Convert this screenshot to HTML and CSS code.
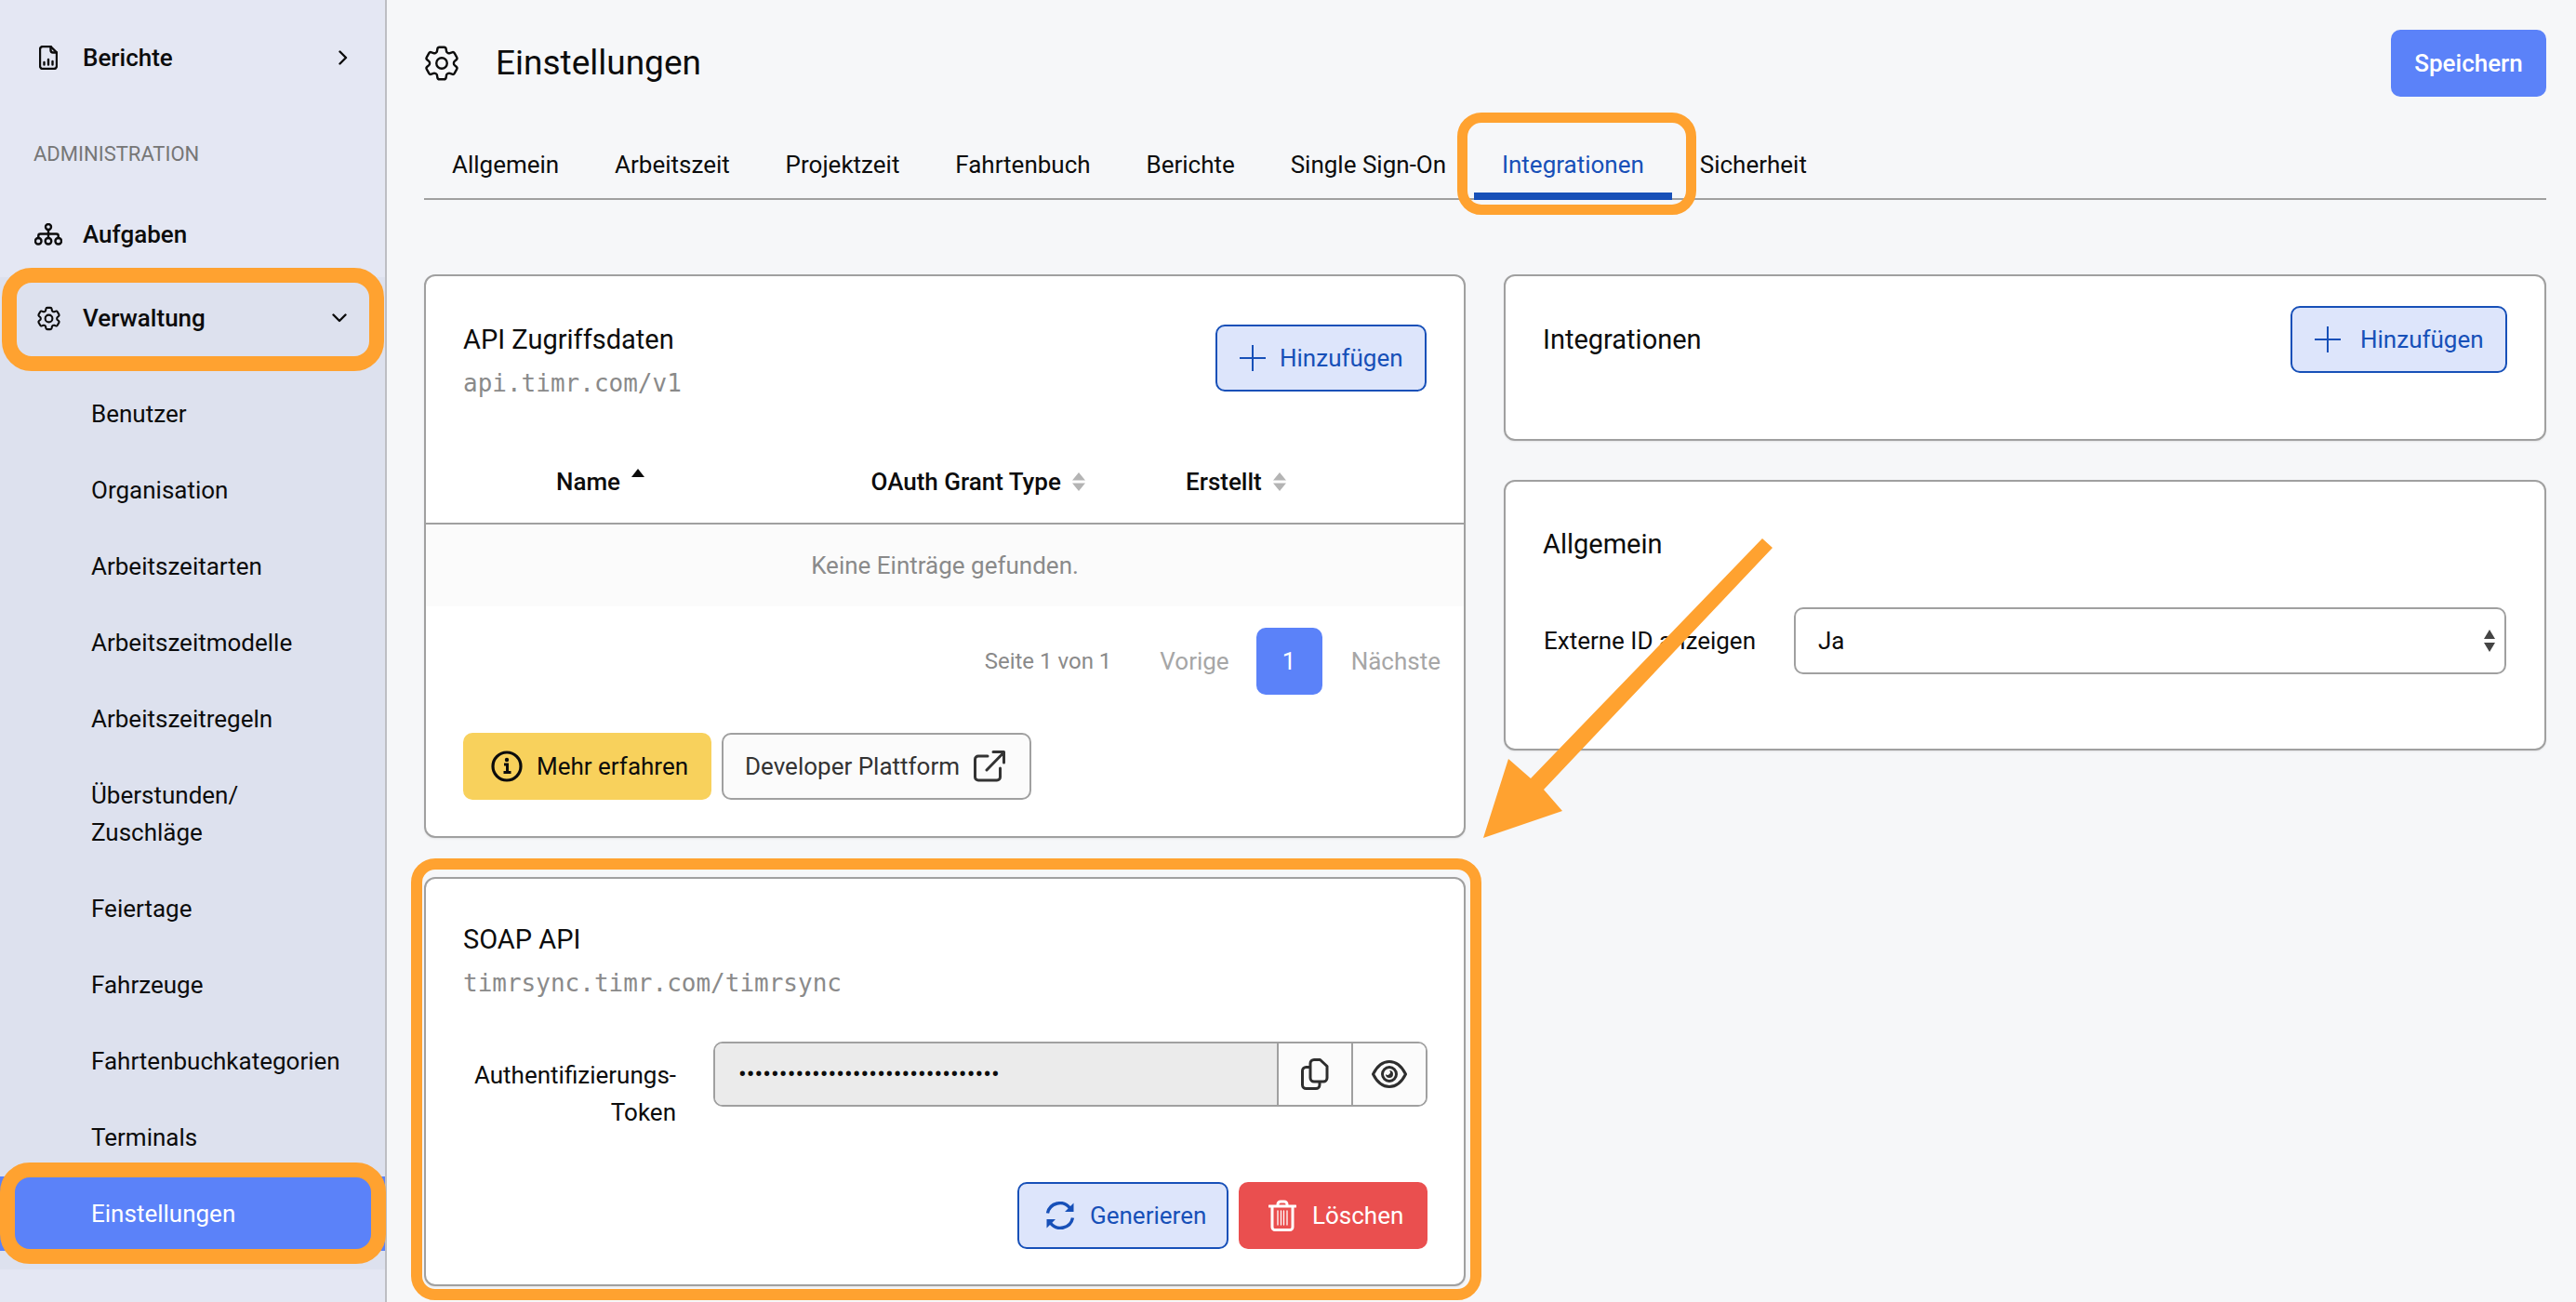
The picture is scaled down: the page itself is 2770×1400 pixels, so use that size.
FILE: index.html
```html
<!DOCTYPE html>
<html lang="de">
<head>
<meta charset="utf-8">
<title>Einstellungen</title>
<link rel="stylesheet" href="styles.css">
</head>
<body>
<svg class="defs" width="0" height="0" aria-hidden="true">
  <symbol id="gear" viewBox="0 0 24 24">
    <path d="M9.594 3.94c.09-.542.56-.94 1.11-.94h2.593c.55 0 1.02.398 1.11.94l.213 1.281c.063.374.313.686.645.87.074.04.147.083.22.127.325.196.72.257 1.075.124l1.217-.456a1.125 1.125 0 0 1 1.37.49l1.296 2.247a1.125 1.125 0 0 1-.26 1.431l-1.003.827c-.293.241-.438.613-.43.992a7.723 7.723 0 0 1 0 .255c-.008.378.137.75.43.991l1.004.827c.424.35.534.955.26 1.43l-1.298 2.247a1.125 1.125 0 0 1-1.369.491l-1.217-.456c-.355-.133-.75-.072-1.076.124a6.47 6.47 0 0 1-.22.128c-.331.183-.581.495-.644.869l-.213 1.281c-.09.543-.56.94-1.11.94h-2.594c-.55 0-1.019-.398-1.11-.94l-.213-1.281c-.062-.374-.312-.686-.644-.87a6.52 6.52 0 0 1-.22-.127c-.325-.196-.72-.257-1.076-.124l-1.217.456a1.125 1.125 0 0 1-1.369-.49l-1.297-2.247a1.125 1.125 0 0 1 .26-1.431l1.004-.827c.292-.24.437-.613.43-.991a6.932 6.932 0 0 1 0-.255c.007-.38-.138-.751-.43-.992l-1.004-.827a1.125 1.125 0 0 1-.26-1.43l1.297-2.247a1.125 1.125 0 0 1 1.37-.491l1.216.456c.356.133.751.072 1.076-.124.072-.044.146-.086.22-.128.332-.183.582-.495.644-.869l.214-1.28Z"/>
    <circle cx="12" cy="12" r="3"/>
  </symbol>
  <symbol id="plus" viewBox="0 0 28 28"><path d="M14 0v28M0 14h28"/></symbol>
  <symbol id="sort" viewBox="0 0 16 20"><path d="M8 0l7 8.5H1zM8 20l7-8.5H1z"/></symbol>
</svg>

<div class="app">
  <aside class="sidebar">
    <a class="nav-item nav-first">
      <svg class="nav-icon icon-file" viewBox="0 0 20 26"><path d="M4 1h8.500L19 7.500V22a3 3 0 0 1-3 3H4a3 3 0 0 1-3-3V4a3 3 0 0 1 3-3z"/><path d="M12.500 1v4A2.500 2.500 0 0 0 15 7.500h4"/><path d="M5.500 20.500V18M10 20.500v-5.500M14.500 20.500V17"/></svg>
      <span class="nav-label">Berichte</span>
      <svg class="chev-right" viewBox="0 0 10 16"><path d="M1.500 1.500L8 8l-6.500 6.500"/></svg>
    </a>
    <div class="nav-section">ADMINISTRATION</div>
    <a class="nav-item">
      <svg class="nav-icon icon-tree" viewBox="0 0 30 24"><circle cx="15" cy="4" r="3"/><rect x="1" y="16" width="6.500" height="6.500" rx="3"/><rect x="11.700" y="16" width="6.500" height="6.500" rx="3"/><rect x="22.500" y="16" width="6.500" height="6.500" rx="3"/><path d="M15 7.500V16M4.300 16v-2.500a2 2 0 0 1 2-2h17.400a2 2 0 0 1 2 2V16"/></svg>
      <span class="nav-label">Aufgaben</span>
    </a>
    <div class="nav-group">
      <a class="nav-item nav-open">
        <svg class="nav-icon icon-gear"><use href="#gear"/></svg>
        <span class="nav-label">Verwaltung</span>
        <svg class="chev-down" viewBox="0 0 16 10"><path d="M1.500 1.500L8 8l6.500-6.500"/></svg>
      </a>
      <a class="sub-item">Benutzer</a>
      <a class="sub-item">Organisation</a>
      <a class="sub-item">Arbeitszeitarten</a>
      <a class="sub-item">Arbeitszeitmodelle</a>
      <a class="sub-item">Arbeitszeitregeln</a>
      <a class="sub-item">Überstunden/<br>Zuschläge</a>
      <a class="sub-item">Feiertage</a>
      <a class="sub-item">Fahrzeuge</a>
      <a class="sub-item">Fahrtenbuchkategorien</a>
      <a class="sub-item">Terminals</a>
      <a class="sub-item sub-active">Einstellungen</a>
    </div>
  </aside>

  <main class="main">
    <header class="page-head">
      <div class="page-title">
        <svg class="title-icon"><use href="#gear"/></svg>
        <h1>Einstellungen</h1>
      </div>
      <button class="btn btn-primary">Speichern</button>
    </header>

    <nav class="tabs">
      <a class="tab">Allgemein</a>
      <a class="tab">Arbeitszeit</a>
      <a class="tab">Projektzeit</a>
      <a class="tab">Fahrtenbuch</a>
      <a class="tab">Berichte</a>
      <a class="tab">Single Sign-On</a>
      <a class="tab tab-active">Integrationen</a>
      <a class="tab">Sicherheit</a>
    </nav>

    <div class="columns">
      <div class="col">
        <section class="card">
          <div class="card-head">
            <div class="card-heading">
              <h2>API Zugriffsdaten</h2>
              <div class="mono">api.timr.com/v1</div>
            </div>
            <button class="btn btn-soft btn-add-low">
              <svg class="plus"><use href="#plus"/></svg>Hinzufügen
            </button>
          </div>
          <div class="table-head">
            <div class="th">Name<svg class="sort-up" viewBox="0 0 16 10"><path d="M8 0l7 9H1z"/></svg></div>
            <div class="th">OAuth Grant Type<svg class="sort"><use href="#sort"/></svg></div>
            <div class="th">Erstellt<svg class="sort"><use href="#sort"/></svg></div>
          </div>
          <div class="table-empty">Keine Einträge gefunden.</div>
          <div class="pager">
            <span class="pager-info">Seite 1 von 1</span>
            <span class="pager-link pager-prev">Vorige</span>
            <span class="pager-num">1</span>
            <span class="pager-link">Nächste</span>
          </div>
          <div class="card-links">
            <button class="btn btn-yellow">
              <svg class="info" viewBox="0 0 34 34"><circle cx="17" cy="17" r="15"/><path d="M14 15h3.500v8M13.500 23.500h8" class="info-stem"/><circle cx="17" cy="10" r="2.200" class="info-dot"/></svg>Mehr erfahren
            </button>
            <button class="btn btn-outline">Developer Plattform
              <svg class="ext" viewBox="0 0 34 34"><path d="M15 6H5a3.500 3.500 0 0 0-3.500 3.500v19A3.500 3.500 0 0 0 5 32h20a3.500 3.500 0 0 0 3.500-3.500V19"/><path d="M14 21L32.500 2M21 1.500h11.500V13"/></svg>
            </button>
          </div>
        </section>

        <section class="card">
          <div class="card-heading soap-heading">
            <h2>SOAP API</h2>
            <div class="mono">timrsync.timr.com/timrsync</div>
          </div>
          <div class="form-row soap-row">
            <label class="form-label">Authentifizierungs-<br>Token</label>
            <div class="input-group">
              <div class="input-value">••••••••••••••••••••••••••••••••</div>
              <button class="input-btn">
                <svg class="copy" viewBox="0 0 30 34"><path d="M14 1.500h6.500l7.500 7V21a4 4 0 0 1-4 4H14a4 4 0 0 1-4-4V5.500a4 4 0 0 1 4-4z"/><path d="M10 9.500H5.500a4 4 0 0 0-4 4V28.500a4 4 0 0 0 4 4H16a4 4 0 0 0 4-4V25"/></svg>
              </button>
              <button class="input-btn">
                <svg class="eye" viewBox="0 0 38 30"><path d="M1.500 15C6 6 12 1.500 19 1.500S32 6 36.500 15C32 24 26 28.500 19 28.500S6 24 1.500 15z"/><circle cx="19" cy="15" r="7.500"/><path class="eye-glint" d="M19 11a4 4 0 1 1-4 4 2.500 2.500 0 0 0 4-4z"/></svg>
              </button>
            </div>
          </div>
          <div class="soap-actions">
            <button class="btn btn-soft btn-gen">
              <svg class="sync" viewBox="0 0 32 30"><path d="M2.500 12.500A13.500 13.500 0 0 1 26.500 7"/><path d="M29.500 17.500A13.500 13.500 0 0 1 5.500 23"/><path class="sync-head" d="M30.500 1.500v9.500H21zM1.500 28.500V19H11z"/></svg>Generieren
            </button>
            <button class="btn btn-danger">
              <svg class="trash" viewBox="0 0 30 34"><path d="M1 7h28M10 7V5a3 3 0 0 1 3-3h4a3 3 0 0 1 3 3v2M4 7v22.500A3 3 0 0 0 7 32.500h16a3 3 0 0 0 3-3V7"/><path class="trash-lines" d="M10 12v15M13.500 12v15M16.500 12v15M20 12v15"/></svg>Löschen
            </button>
          </div>
        </section>
      </div>

      <div class="col">
        <section class="card card-integrations">
          <div class="card-head">
            <h2 class="card-heading">Integrationen</h2>
            <button class="btn btn-soft btn-add-wide">
              <svg class="plus"><use href="#plus"/></svg>Hinzufügen
            </button>
          </div>
        </section>
        <section class="card card-general">
          <h2 class="general-heading">Allgemein</h2>
          <div class="form-row general-row">
            <label class="form-label">Externe ID anzeigen</label>
            <div class="select">
              <span>Ja</span>
              <svg class="select-arrows" viewBox="0 0 14 24"><path d="M7 0l6 10H1zM7 24l6-10H1z"/></svg>
            </div>
          </div>
        </section>
      </div>
    </div>
  </main>
</div>

<div class="marks">
  <div class="mark mark-verwaltung"></div>
  <div class="mark mark-einstellungen"></div>
  <div class="mark mark-tab"></div>
  <div class="mark mark-soap"></div>
  <svg class="arrow" viewBox="0 0 2770 1400"><polygon points="1895,579 1906,589 1660,849 1680,872 1595,901 1622,816 1646,837"/></svg>
</div>
</body>
</html>
```

FILE: styles.css
```css
* { box-sizing: border-box; }

html, body {
  margin: 0;
  height: 100%;
}

body {
  position: relative;
  height: 1400px;
  overflow: hidden;
  background: #f6f7f9;
  color: #0c0c0c;
  font: 400 26px/40px Roboto, "Liberation Sans", sans-serif;
}

h1, h2 { margin: 0; font-weight: 400; }

button { font: inherit; }

.defs { position: absolute; }

.app {
  display: flex;
  height: 1400px;
}

/* Sidebar */
.sidebar {
  flex: 0 0 416px;
  padding-top: 22px;
  background: #e4e7f3;
  border-right: 2px solid #bdbec3;
}

.nav-item {
  display: flex;
  align-items: center;
  height: 80px;
  padding-left: 36px;
  font-weight: 500;
}

.nav-icon {
  flex: none;
  fill: none;
  stroke: #0c0c0c;
  stroke-width: 2.400;
  stroke-linecap: round;
  stroke-linejoin: round;
}

.icon-file { width: 20px; height: 26px; margin: 0 27px 0 6px; }
.icon-tree { width: 30px; height: 24px; margin: 0 22px 0 1px; }
.icon-gear { width: 31px; height: 31px; margin: 0 21px 0 1px; stroke-width: 1.600; }

.chev-right, .chev-down {
  flex: none;
  margin-left: auto;
  fill: none;
  stroke: #0c0c0c;
  stroke-width: 2.400;
  stroke-linecap: round;
  stroke-linejoin: round;
}

.chev-right { width: 10px; height: 16px; margin-right: 40px; }
.chev-down { width: 16px; height: 10px; margin-right: 41px; }

.nav-section {
  height: 40px;
  margin: 44px 0 26px;
  padding-left: 36px;
  color: #767676;
  font-size: 22px;
}

.nav-group {
  margin-top: 6px;
  padding-bottom: 20px;
  background: #dde1ee;
}

.nav-open {
  height: 88px;
  margin-bottom: 19px;
}

.sub-item {
  display: block;
  margin-bottom: 2px;
  padding: 20px 20px 20px 98px;
}

.sub-item:last-child { margin-bottom: 0; }

.sub-active {
  margin-top: 1px;
  background: #5b82f9;
  color: #fff;
}

/* Main */
.main {
  flex: 1;
  min-width: 0;
  padding: 32px 32px 0 40px;
}

.page-head {
  display: flex;
  align-items: center;
  justify-content: space-between;
  height: 72px;
}

.page-title {
  display: flex;
  align-items: center;
  gap: 39px;
}

.page-title h1 { font-size: 37px; }

.title-icon {
  width: 46px;
  height: 46px;
  margin-left: -4px;
  margin-right: -4px;
  fill: none;
  stroke: #0c0c0c;
  stroke-width: 1.250;
}

.tabs {
  display: flex;
  margin-top: 33px;
  border-bottom: 2px solid #a0a0a0;
}

.tab {
  margin-bottom: -2px;
  padding: 20px 29.930px 10px;
  border-bottom: 8px solid transparent;
}

.tab-active {
  color: #1750b8;
  border-bottom-color: #1750b8;
}

.columns {
  display: grid;
  grid-template-columns: 1120px 1121px;
  gap: 41px;
  margin-top: 80px;
}

.col {
  display: flex;
  flex-direction: column;
  gap: 42px;
}

.card {
  background: #fff;
  border: 2px solid #a0a0a0;
  border-radius: 12px;
  box-shadow: 0 1px 2px rgba(0, 0, 0, .08);
}

.card h2 { font-size: 29px; }

.card-head {
  display: flex;
  justify-content: space-between;
  align-items: flex-start;
  height: 177px;
  padding: 32px 40px 0 40px;
}

.card-heading { margin-top: 16px; }

.mono {
  margin-top: 7px;
  color: #8a8a8a;
  font-family: "DejaVu Sans Mono", "Liberation Mono", monospace;
}

/* Buttons */
.btn {
  display: inline-flex;
  align-items: center;
  flex: none;
  height: 72px;
  padding: 0;
  border: 2px solid transparent;
  border-radius: 10px;
  color: inherit;
  background: none;
}

.btn-primary {
  justify-content: center;
  width: 167px;
  background: #5b82f9;
  color: #fff;
  font-weight: 500;
}

.btn-soft {
  border-color: #1750b8;
  background: #dde5fb;
  color: #1750b8;
}

.btn-add-low { width: 227px; margin-top: 20px; padding-left: 24px; gap: 15px; }
.btn-add-wide { width: 233px; padding-left: 24px; gap: 21px; }
.btn-gen { width: 227px; padding-left: 28px; gap: 16px; }

.btn-yellow {
  width: 267px;
  padding-left: 28px;
  gap: 15px;
  background: #f8d15c;
}

.btn-outline {
  width: 333px;
  padding-left: 23px;
  gap: 15px;
  border-color: #a0a0a0;
  background: #fbfbfb;
  color: #333;
}

.btn-danger {
  width: 203px;
  padding-left: 30px;
  gap: 17px;
  background: #ea4f4f;
  color: #fff;
}

.plus {
  flex: none;
  width: 28px;
  height: 28px;
  fill: none;
  stroke: currentColor;
  stroke-width: 2;
}

.info { flex: none; width: 34px; height: 34px; fill: none; stroke: #0c0c0c; stroke-width: 3.200; }
.info-stem { stroke-width: 3; }
.info-dot { fill: #0c0c0c; stroke: none; }

.ext { flex: none; width: 34px; height: 34px; fill: none; stroke: #333; stroke-width: 3; stroke-linecap: round; stroke-linejoin: round; }

.sync { flex: none; width: 32px; height: 30px; fill: none; stroke: currentColor; stroke-width: 3.400; }
.sync-head { fill: currentColor; stroke: none; }

.trash { flex: none; width: 30px; height: 34px; fill: none; stroke: #fff; stroke-width: 3; stroke-linecap: round; stroke-linejoin: round; }
.trash-lines { stroke-width: 1.300; }

/* Table */
.table-head {
  display: grid;
  grid-template-columns: repeat(3, 338.500px);
  align-items: center;
  height: 90px;
  padding-left: 140px;
  border-bottom: 2px solid #a0a0a0;
}

.th {
  display: flex;
  align-items: center;
  font-weight: 500;
}

.sort-up {
  width: 16px;
  height: 10px;
  margin: -18px 0 0 11px;
  fill: #0c0c0c;
}

.sort {
  width: 16px;
  height: 20px;
  margin-left: 11px;
  fill: #b4b4b4;
}

.table-empty {
  display: flex;
  align-items: center;
  justify-content: center;
  height: 88px;
  background: #fbfbfb;
  color: #8a8a8a;
}

.pager {
  display: flex;
  align-items: center;
  justify-content: flex-end;
  height: 72px;
  margin-top: 23px;
  padding-right: 25px;
}

.pager-info { color: #8a8a8a; margin-right: 52px; font-size: 24px; }
.pager-link { color: #a6a6a6; }
.pager-prev { margin-right: 29px; }

.pager-num {
  display: flex;
  align-items: center;
  justify-content: center;
  width: 71px;
  height: 72px;
  margin-right: 31px;
  border-radius: 10px;
  background: #5b82f9;
  color: #fff;
}

.card-links {
  display: flex;
  gap: 11px;
  margin-top: 41px;
  padding: 0 40px 39px;
}

/* SOAP */
.soap-heading { margin: 45px 0 0 40px; }
.general-heading { margin: 47px 0 0 40px; }

.form-row {
  display: flex;
  gap: 41px;
  padding: 0 39px 0 40px;
}

.form-label {
  flex: 0 0 229px;
  text-align: right;
}

.soap-row { margin-top: 43px; gap: 40px; }
.soap-row .form-label { padding-top: 16px; }

.input-group {
  display: flex;
  flex: 1;
  height: 70px;
  border: 2px solid #a0a0a0;
  border-radius: 10px;
  overflow: hidden;
}

.input-value {
  flex: 1;
  padding: 13px 0 0 25px;
  background: #ebebeb;
  font-size: 26px;
}

.input-btn {
  display: flex;
  align-items: center;
  justify-content: center;
  flex: 0 0 80px;
  padding: 0;
  border: 0;
  border-left: 2px solid #a0a0a0;
  background: #fbfbfb;
}

.copy { width: 30px; height: 34px; fill: none; stroke: #2e2e2e; stroke-width: 3; stroke-linejoin: round; }
.eye { width: 38px; height: 30px; fill: none; stroke: #2e2e2e; stroke-width: 3; stroke-linejoin: round; }
.eye-glint { fill: #2e2e2e; stroke: none; }

.soap-actions {
  display: flex;
  justify-content: flex-end;
  gap: 11px;
  margin-top: 55px;
  padding: 0 39px 38px 0;
}

/* Right column */
.card-integrations { height: 179px; }

.card-general { height: 291px; }
.general-row { margin-top: 48px; padding-right: 41px; align-items: center; }

.select {
  display: flex;
  flex: 1;
  align-items: center;
  justify-content: space-between;
  height: 72px;
  padding: 0 9px 0 24px;
  border: 2px solid #a0a0a0;
  border-radius: 10px;
}

.select-arrows { width: 14px; height: 24px; fill: #444; }

/* Annotations over the screenshot */
.marks {
  position: absolute;
  inset: 0;
  pointer-events: none;
}

.mark {
  position: absolute;
  border: 12px solid #ffa230;
  border-radius: 30px;
}

.mark-verwaltung {
  left: 2px;
  top: 288px;
  width: 411px;
  height: 111px;
  border-width: 16px;
  border-radius: 32px;
}

.mark-einstellungen {
  left: 0;
  top: 1250px;
  width: 415px;
  height: 109px;
  border-width: 16px;
  border-radius: 32px;
}

.mark-tab {
  left: 1567px;
  top: 121px;
  width: 257px;
  height: 110px;
  border-width: 11px;
  border-radius: 26px;
}

.mark-soap {
  left: 442px;
  top: 923px;
  width: 1151px;
  height: 475px;
  border-radius: 26px;
}

.arrow {
  position: absolute;
  inset: 0;
  width: 2770px;
  height: 1400px;
  fill: #ffa230;
}
```
